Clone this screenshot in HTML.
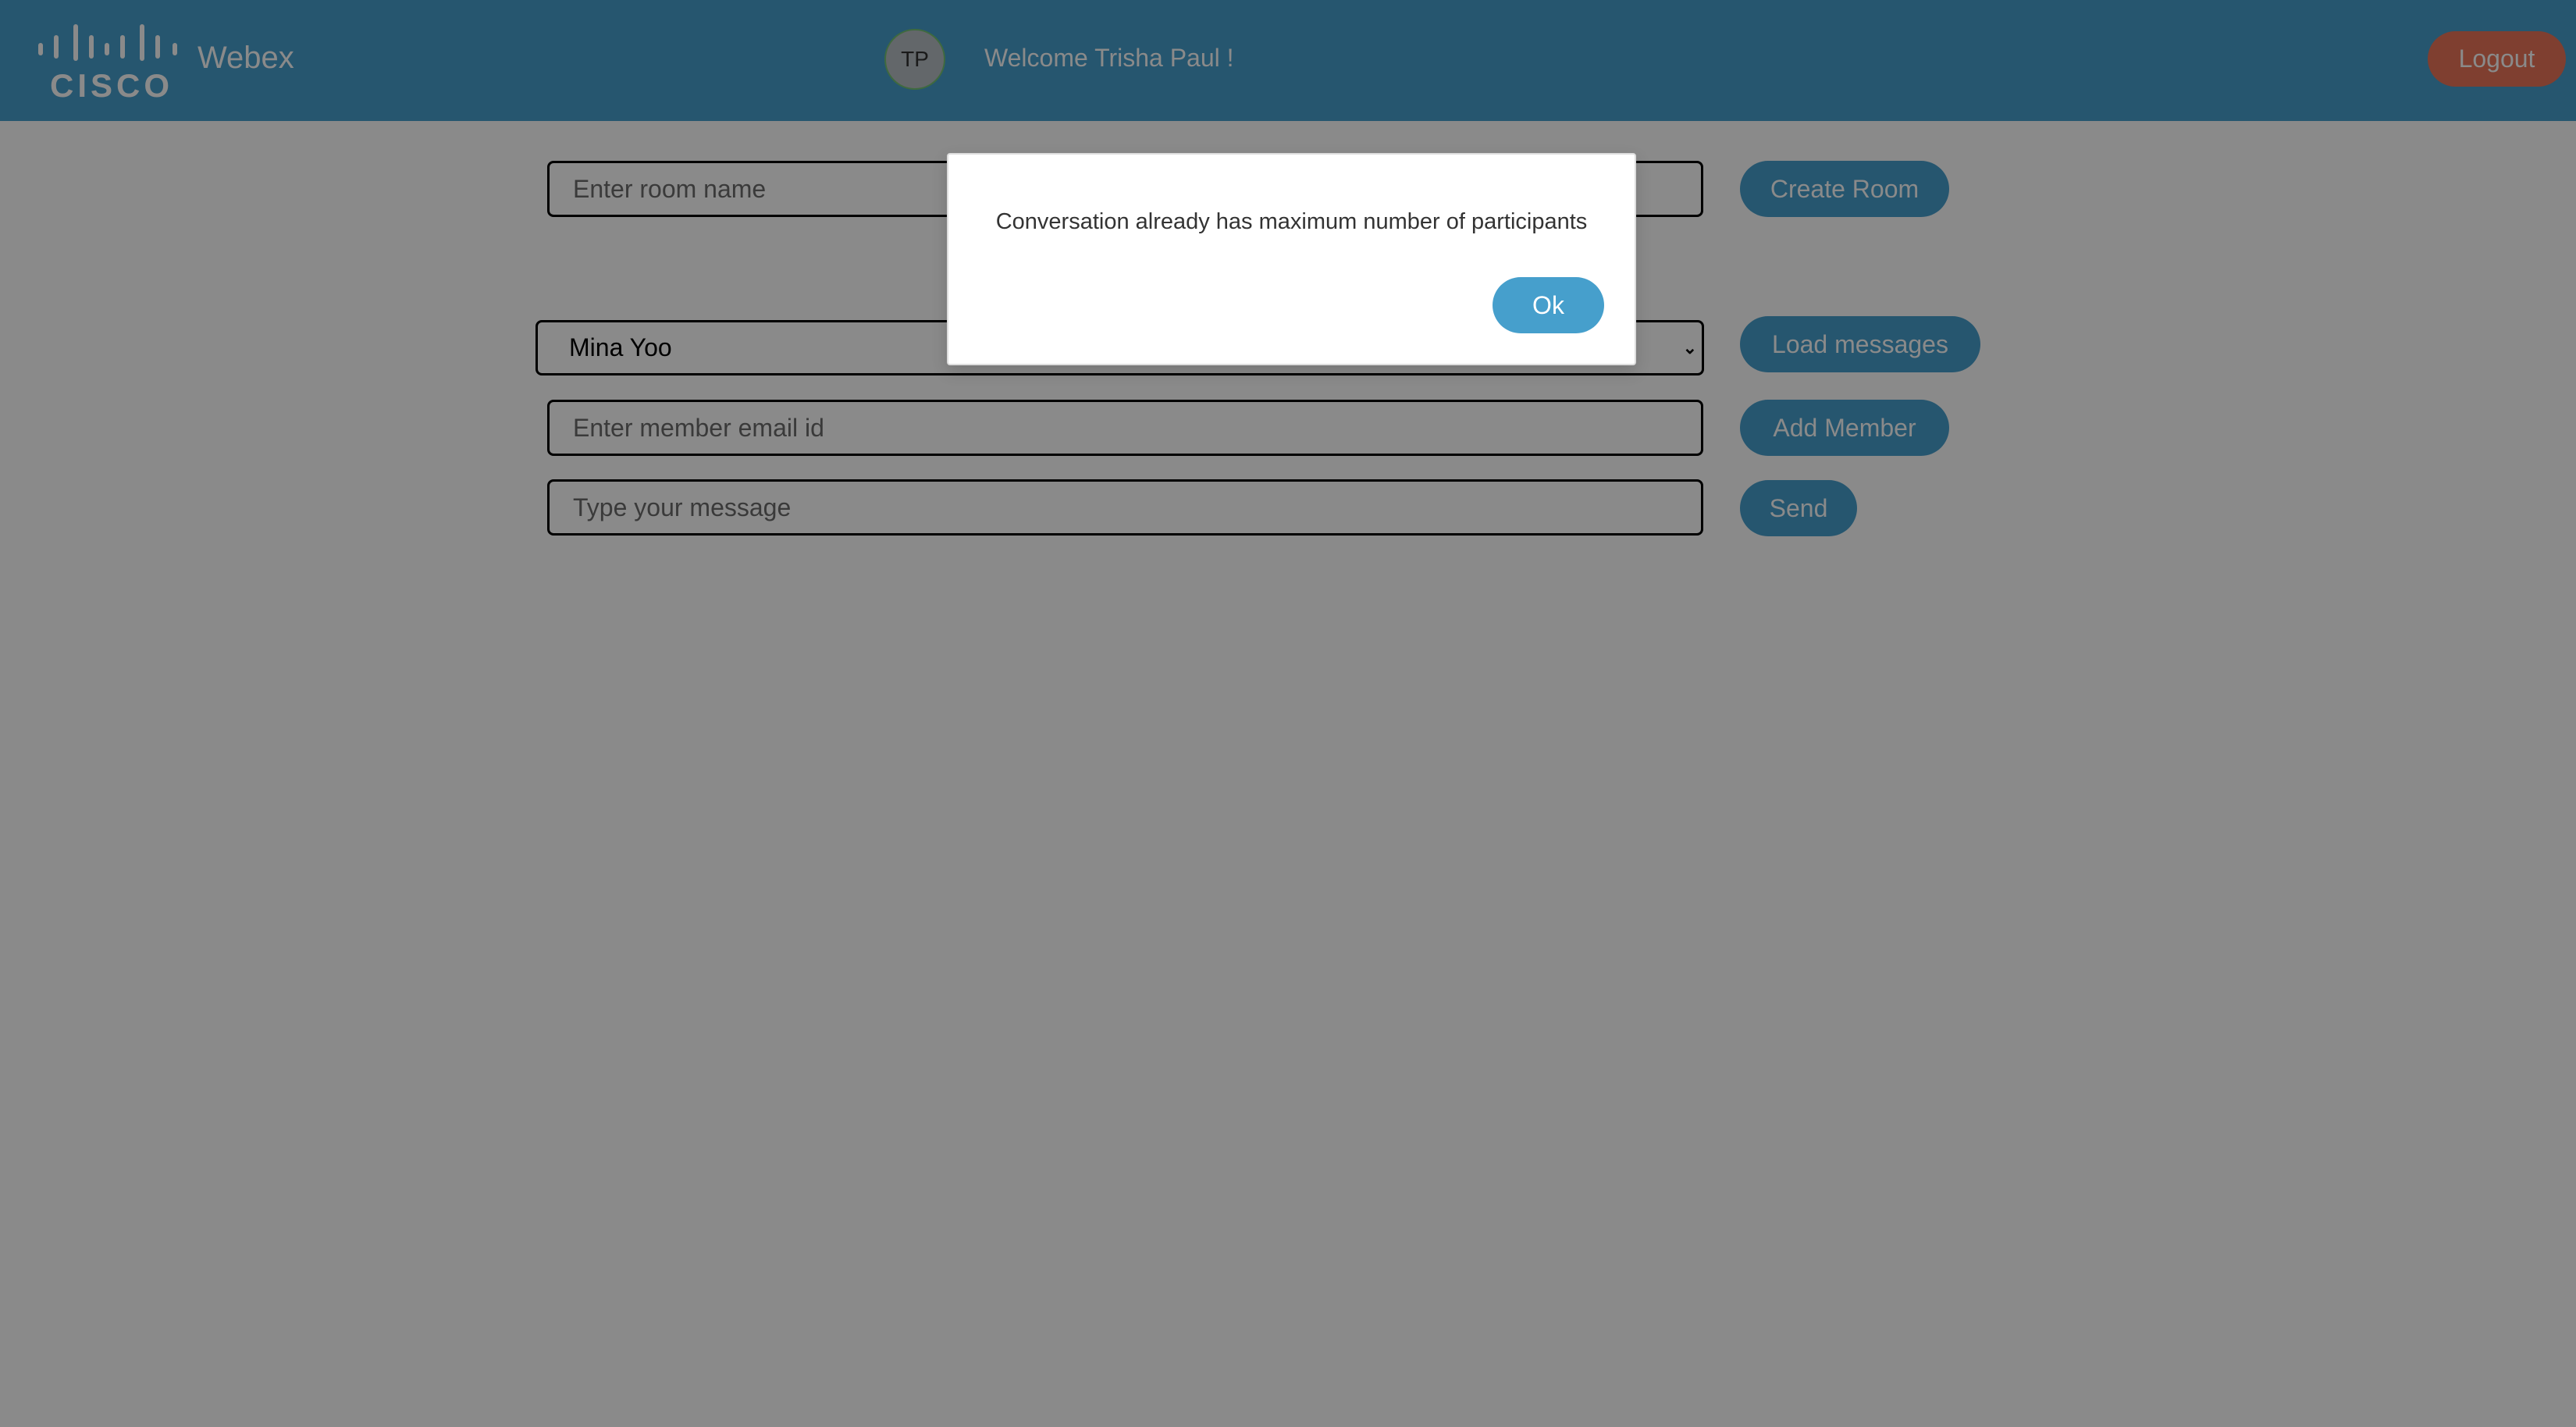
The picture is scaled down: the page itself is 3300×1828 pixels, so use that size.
<!DOCTYPE html>
<html><head><meta charset="utf-8"><style>
*{box-sizing:border-box;margin:0;padding:0}
body{width:3300px;height:1828px;background:#8a8a8a;font-family:"Liberation Sans",sans-serif;position:relative;overflow:hidden}
.hdr{position:absolute;left:0;top:0;width:3300px;height:155px;background:#26566f}
.abs{position:absolute}
.inp{position:absolute;border:3px solid #000;border-radius:8px;font-size:32px;color:#3a3a3a;padding-left:30px;display:flex;align-items:center}
.btn{position:absolute;background:#26566f;border-radius:36px;color:#8a8a8a;font-size:32px;display:flex;align-items:center;justify-content:center;height:72px}
</style></head><body>
<div class="hdr"></div>
<svg class="abs" style="left:40px;top:20px" width="200" height="120">
<g fill="#8a8a8a">
<rect x="9" y="35" width="6" height="16" rx="3"/>
<rect x="29" y="25" width="6" height="30" rx="3"/>
<rect x="54" y="11" width="6" height="47" rx="3"/>
<rect x="74" y="25" width="6" height="30" rx="3"/>
<rect x="94" y="35" width="6" height="16" rx="3"/>
<rect x="114" y="25" width="6" height="30" rx="3"/>
<rect x="139" y="11" width="6" height="47" rx="3"/>
<rect x="159" y="25" width="6" height="30" rx="3"/>
<rect x="181" y="35" width="6" height="16" rx="3"/>
</g>
<text x="24" y="104" font-family="Liberation Sans" font-weight="bold" font-size="42" letter-spacing="5" fill="#8a8a8a">CISCO</text>
</svg>
<div class="abs" style="left:253px;top:52px;font-size:40px;color:#8a8a8a">Webex</div>
<div class="abs" style="left:1133px;top:37px;width:78px;height:78px;border-radius:50%;background:#63676a;border:2px solid #3f6a3f;font-size:28px;color:#1a1a1a;display:flex;align-items:center;justify-content:center">TP</div>
<div class="abs" style="left:1261px;top:56px;font-size:32px;color:#8a8a8a">Welcome Trisha Paul !</div>
<div class="abs" style="left:3110px;top:40px;width:177px;height:71px;border-radius:36px;background:#7f3f30;color:#8a8a8a;font-size:32px;display:flex;align-items:center;justify-content:center">Logout</div>

<div class="inp" style="left:701px;top:206px;width:1481px;height:72px">Enter room name</div>
<div class="btn" style="left:2229px;top:206px;width:268px">Create Room</div>
<div class="inp" style="left:686px;top:410px;width:1497px;height:71px;color:#000;padding-left:40px">Mina Yoo<span style="position:absolute;right:6px;font-size:22px;font-weight:bold">&#8964;</span></div>
<div class="btn" style="left:2229px;top:405px;width:308px">Load messages</div>
<div class="inp" style="left:701px;top:512px;width:1481px;height:72px">Enter member email id</div>
<div class="btn" style="left:2229px;top:512px;width:268px">Add Member</div>
<div class="inp" style="left:701px;top:614px;width:1481px;height:72px">Type your message</div>
<div class="btn" style="left:2229px;top:615px;width:150px">Send</div>

<div class="abs" style="left:1213px;top:196px;width:883px;height:272px;background:#fff;border:2px solid #ddd;border-radius:4px;box-shadow:0 8px 20px rgba(0,0,0,0.15)">
<div class="abs" style="left:0;width:100%;top:70px;text-align:center;font-size:29px;color:#333">Conversation already has maximum number of participants</div>
<div class="abs" style="left:697px;top:157px;width:143px;height:72px;border-radius:36px;background:#469fcc;color:#fff;font-size:32px;display:flex;align-items:center;justify-content:center">Ok</div>
</div>
</body></html>
